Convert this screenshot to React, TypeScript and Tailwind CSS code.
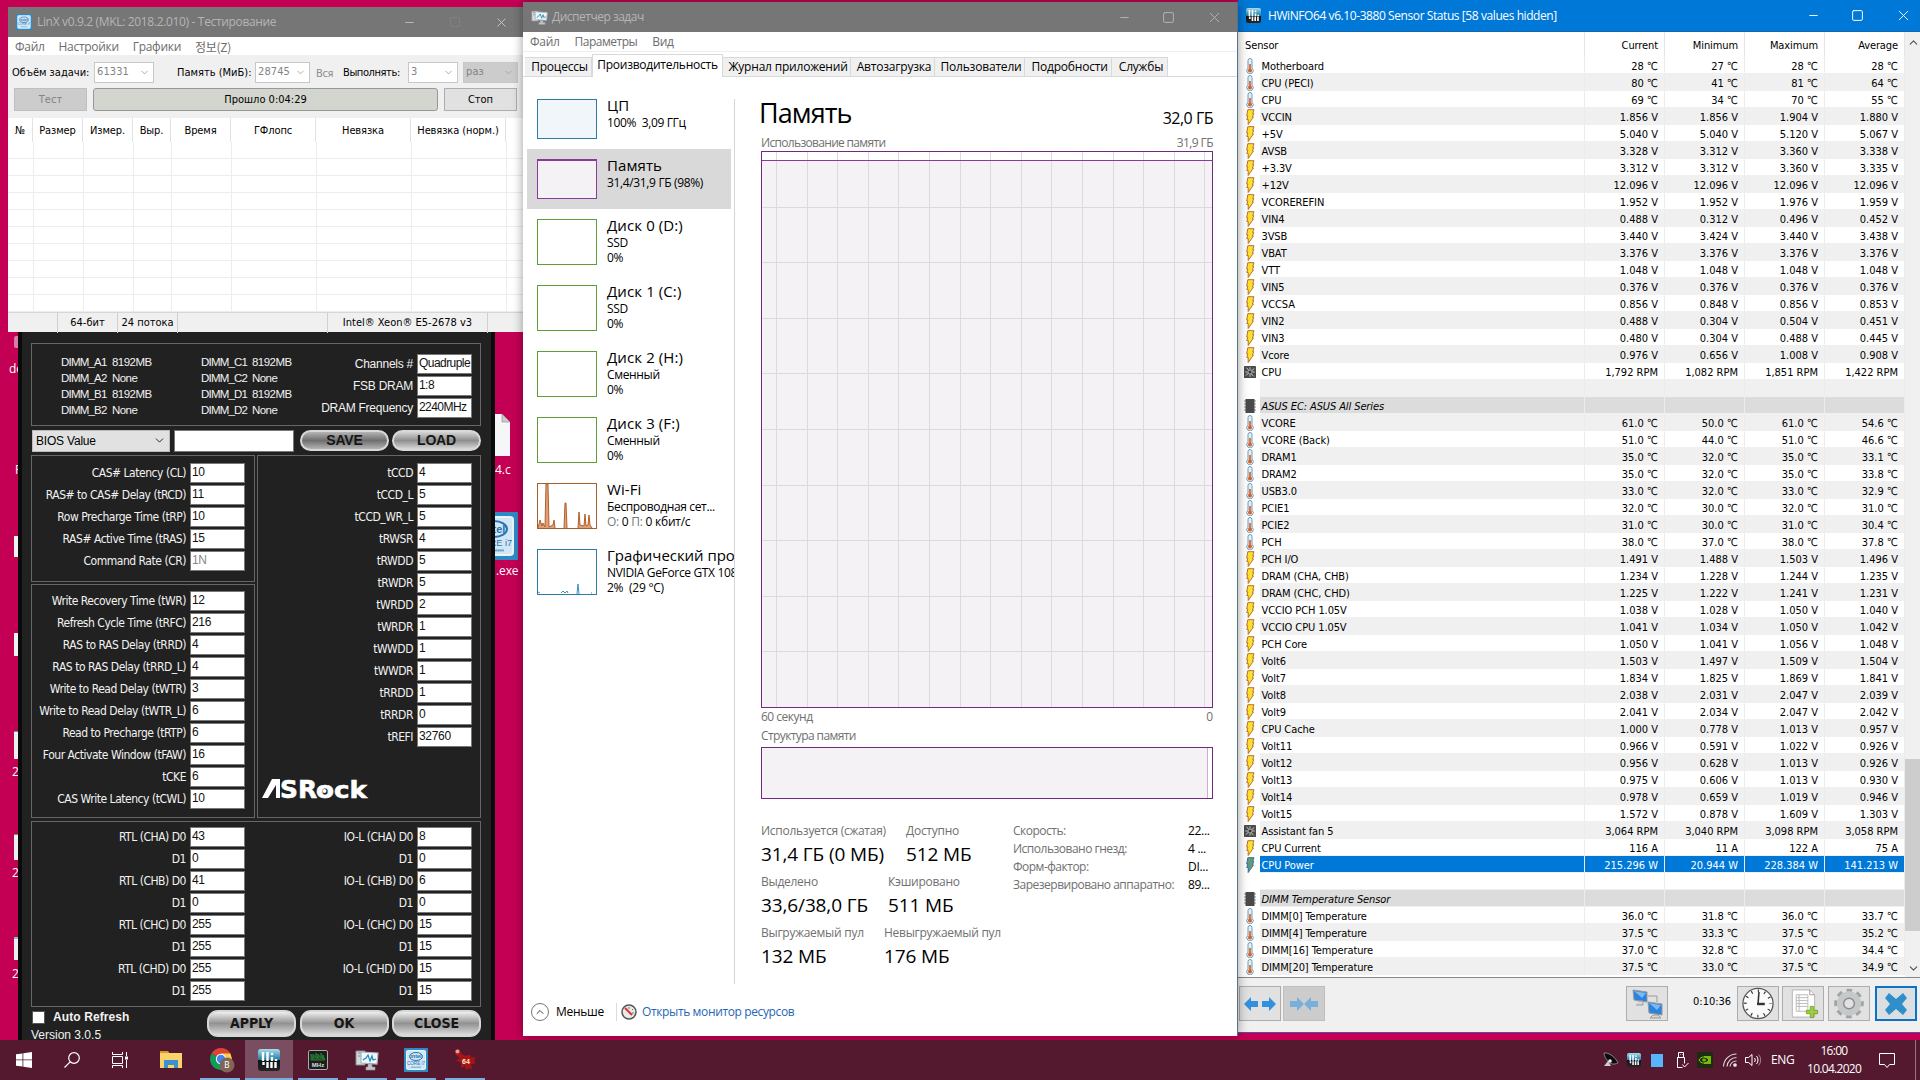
import type { ReactNode } from 'react'
import { ChevronDown, ChevronUp, Minus, Square, X } from 'lucide-react'

const tahoma = "font-['DejaVu_Sans_Condensed','DejaVu_Sans',sans-serif] text-[11px]"
const segoe = "font-['Open_Sans','Noto_Sans',sans-serif] text-[12px]"

type Sensor = [kind: string, name: string, ...values: string[]]

const sensors: Sensor[] = [
  ['t', 'Motherboard', '28 °C', '27 °C', '28 °C', '28 °C'],
  ['t', 'CPU (PECI)', '80 °C', '41 °C', '81 °C', '64 °C'],
  ['t', 'CPU', '69 °C', '34 °C', '70 °C', '55 °C'],
  ['v', 'VCCIN', '1.856 V', '1.856 V', '1.904 V', '1.880 V'],
  ['v', '+5V', '5.040 V', '5.040 V', '5.120 V', '5.067 V'],
  ['v', 'AVSB', '3.328 V', '3.312 V', '3.360 V', '3.338 V'],
  ['v', '+3.3V', '3.312 V', '3.312 V', '3.360 V', '3.335 V'],
  ['v', '+12V', '12.096 V', '12.096 V', '12.096 V', '12.096 V'],
  ['v', 'VCOREREFIN', '1.952 V', '1.952 V', '1.976 V', '1.959 V'],
  ['v', 'VIN4', '0.488 V', '0.312 V', '0.496 V', '0.452 V'],
  ['v', '3VSB', '3.440 V', '3.424 V', '3.440 V', '3.438 V'],
  ['v', 'VBAT', '3.376 V', '3.376 V', '3.376 V', '3.376 V'],
  ['v', 'VTT', '1.048 V', '1.048 V', '1.048 V', '1.048 V'],
  ['v', 'VIN5', '0.376 V', '0.376 V', '0.376 V', '0.376 V'],
  ['v', 'VCCSA', '0.856 V', '0.848 V', '0.856 V', '0.853 V'],
  ['v', 'VIN2', '0.488 V', '0.304 V', '0.504 V', '0.451 V'],
  ['v', 'VIN3', '0.480 V', '0.304 V', '0.488 V', '0.445 V'],
  ['v', 'Vcore', '0.976 V', '0.656 V', '1.008 V', '0.908 V'],
  ['f', 'CPU', '1,792 RPM', '1,082 RPM', '1,851 RPM', '1,422 RPM'],
  ['', '', '', '', '', ''],
  ['h', 'ASUS EC: ASUS All Series', '', '', '', ''],
  ['t', 'VCORE', '61.0 °C', '50.0 °C', '61.0 °C', '54.6 °C'],
  ['t', 'VCORE (Back)', '51.0 °C', '44.0 °C', '51.0 °C', '46.6 °C'],
  ['t', 'DRAM1', '35.0 °C', '32.0 °C', '35.0 °C', '33.1 °C'],
  ['t', 'DRAM2', '35.0 °C', '32.0 °C', '35.0 °C', '33.8 °C'],
  ['t', 'USB3.0', '33.0 °C', '32.0 °C', '33.0 °C', '32.9 °C'],
  ['t', 'PCIE1', '32.0 °C', '30.0 °C', '32.0 °C', '31.0 °C'],
  ['t', 'PCIE2', '31.0 °C', '30.0 °C', '31.0 °C', '30.4 °C'],
  ['t', 'PCH', '38.0 °C', '37.0 °C', '38.0 °C', '37.8 °C'],
  ['v', 'PCH I/O', '1.491 V', '1.488 V', '1.503 V', '1.496 V'],
  ['v', 'DRAM (CHA, CHB)', '1.234 V', '1.228 V', '1.244 V', '1.235 V'],
  ['v', 'DRAM (CHC, CHD)', '1.225 V', '1.222 V', '1.241 V', '1.231 V'],
  ['v', 'VCCIO PCH 1.05V', '1.038 V', '1.028 V', '1.050 V', '1.040 V'],
  ['v', 'VCCIO CPU 1.05V', '1.041 V', '1.034 V', '1.050 V', '1.042 V'],
  ['v', 'PCH Core', '1.050 V', '1.041 V', '1.056 V', '1.048 V'],
  ['v', 'Volt6', '1.503 V', '1.497 V', '1.509 V', '1.504 V'],
  ['v', 'Volt7', '1.834 V', '1.825 V', '1.869 V', '1.841 V'],
  ['v', 'Volt8', '2.038 V', '2.031 V', '2.047 V', '2.039 V'],
  ['v', 'Volt9', '2.041 V', '2.034 V', '2.047 V', '2.042 V'],
  ['v', 'CPU Cache', '1.000 V', '0.778 V', '1.013 V', '0.957 V'],
  ['v', 'Volt11', '0.966 V', '0.591 V', '1.022 V', '0.926 V'],
  ['v', 'Volt12', '0.956 V', '0.628 V', '1.013 V', '0.926 V'],
  ['v', 'Volt13', '0.975 V', '0.606 V', '1.013 V', '0.930 V'],
  ['v', 'Volt14', '0.978 V', '0.659 V', '1.019 V', '0.946 V'],
  ['v', 'Volt15', '1.572 V', '0.878 V', '1.609 V', '1.303 V'],
  ['f', 'Assistant fan 5', '3,064 RPM', '3,040 RPM', '3,098 RPM', '3,058 RPM'],
  ['v', 'CPU Current', '116 A', '11 A', '122 A', '75 A'],
  ['s', 'CPU Power', '215.296 W', '20.944 W', '228.384 W', '141.213 W'],
  ['', '', '', '', '', ''],
  ['h', 'DIMM Temperature Sensor', '', '', '', ''],
  ['t', 'DIMM[0] Temperature', '36.0 °C', '31.8 °C', '36.0 °C', '33.7 °C'],
  ['t', 'DIMM[4] Temperature', '37.5 °C', '33.3 °C', '37.5 °C', '35.2 °C'],
  ['t', 'DIMM[16] Temperature', '37.0 °C', '32.8 °C', '37.0 °C', '34.4 °C'],
  ['t', 'DIMM[20] Temperature', '37.5 °C', '33.0 °C', '37.5 °C', '34.9 °C'],
]

const timings = [
  ['CAS# Latency (CL)', '10'],
  ['RAS# to CAS# Delay (tRCD)', '11'],
  ['Row Precharge Time (tRP)', '10'],
  ['RAS# Active Time (tRAS)', '15'],
  ['Command Rate (CR)', '1N'],
]

const secondary = [
  ['Write Recovery Time (tWR)', '12'],
  ['Refresh Cycle Time (tRFC)', '216'],
  ['RAS to RAS Delay (tRRD)', '4'],
  ['RAS to RAS Delay (tRRD_L)', '4'],
  ['Write to Read Delay (tWTR)', '3'],
  ['Write to Read Delay (tWTR_L)', '6'],
  ['Read to Precharge (tRTP)', '6'],
  ['Four Activate Window (tFAW)', '16'],
  ['tCKE', '6'],
  ['CAS Write Latency (tCWL)', '10'],
]

const turnaround = [
  ['tCCD', '4'], ['tCCD_L', '5'], ['tCCD_WR_L', '5'], ['tRWSR', '4'], ['tRWDD', '5'], ['tRWDR', '5'], ['tWRDD', '2'],
  ['tWRDR', '1'], ['tWWDD', '1'], ['tWWDR', '1'], ['tRRDD', '1'], ['tRRDR', '0'], ['tREFI', '32760'],
]

const rtl = [
  ['RTL (CHA) D0', '43'], ['D1', '0'], ['RTL (CHB) D0', '41'], ['D1', '0'],
  ['RTL (CHC) D0', '255'], ['D1', '255'], ['RTL (CHD) D0', '255'], ['D1', '255'],
]

const iol = [
  ['IO-L (CHA) D0', '8'], ['D1', '0'], ['IO-L (CHB) D0', '6'], ['D1', '0'],
  ['IO-L (CHC) D0', '15'], ['D1', '15'], ['IO-L (CHD) D0', '15'], ['D1', '15'],
]

const IntelIcon = ({ className }: { className: string }) => (
  <svg viewBox="0 0 24 24" className={className}>
    <rect width="24" height="24" fill="#2f8ac4" />
    <rect x="2" y="2" width="20" height="20" rx="2" fill="#e9f3fa" />
    <rect x="3" y="3" width="18" height="18" rx="1" fill="#d3e6f3" />
    <ellipse cx="12" cy="8.5" rx="6.5" ry="4" fill="none" stroke="#2474b5" strokeWidth="1" />
    <text x="12" y="10.4" textAnchor="middle" fontSize="5.5" fontFamily="Liberation Sans" fontWeight="bold" fill="#2474b5">intel</text>
    <text x="12" y="17" textAnchor="middle" fontSize="4.6" fontFamily="Liberation Sans" fill="#2474b5">CORE i7</text>
    <path d="M7 19.2h10" stroke="#6aa9d4" />
  </svg>
)

const HwIcon = ({ className }: { className: string }) => (
  <svg viewBox="0 0 22 22" className={className}>
    <defs>
      <linearGradient id="hw" x1="0" y1="0" x2="0" y2="1">
        <stop offset="0" stopColor="#a9dcec" />
        <stop offset=".5" stopColor="#1f7ba3" />
        <stop offset=".52" stopColor="#0c1318" />
        <stop offset="1" stopColor="#262626" />
      </linearGradient>
    </defs>
    <rect width="22" height="22" rx="3" fill="url(#hw)" />
    <path d="M5 3v9M9.500 3v9M14 8v4M18 10v2M5.500 13v3M9.500 13v6M13.500 13v6M17.500 13v6" stroke="#fff" strokeWidth="2.400" />
    <circle cx="14" cy="5" r="1.300" fill="#fff" />
  </svg>
)

const MonitorIcon = ({ className }: { className: string }) => (
  <svg viewBox="0 0 24 24" className={className}>
    <path d="M1 3h9v14H1z" fill="#d5d9db" stroke="#858b8f" />
    <path d="M3 5h5M3 8h5" stroke="#7d8b91" />
    <path d="M6 4l17 1-1 11-16-1z" fill="#eef7fc" stroke="#b0b5b8" strokeWidth="1.200" />
    <path d="M8 12l3-2 2-3 2 6 2-5 1 4 3-1" fill="none" stroke="#2187b8" strokeWidth="1.200" />
    <path d="M13 16h4v3h3v3h-9v-3h2z" fill="#c1c4c6" stroke="#8f9496" strokeWidth=".6" />
  </svg>
)

const SensorIcon = ({ kind }: { kind: string }) => {
  if (kind === 't')
    return (
      <svg viewBox="0 0 14 16" className="h-4 w-3.5">
        <path d="M5 2.500a2 2 0 0 1 4 0v7.700a3.200 3.200 0 1 1-4 0z" fill="#e4f1f8" stroke="#6f9ab5" />
        <path d="M7 6v6" stroke="#d85a1e" strokeWidth="1.600" />
        <circle cx="7" cy="12.500" r="2" fill="#d4622b" />
      </svg>
    )
  if (kind === 'v' || kind === 's')
    return (
      <svg viewBox="0 0 14 16" className="h-4 w-3.5">
        <path
          d="M4.800.7H11L9.700 4.500h1L9.500 8h.9l-5.200 7.500V10.500H3.800L4.800 7H3.700z"
          fill={kind === 's' ? '#5f9a83' : '#ffe02e'}
          stroke={kind === 's' ? '#3f6f8c' : '#b9702f'}
        />
      </svg>
    )
  if (kind === 'f')
    return (
      <svg viewBox="0 0 14 14" className="h-3 w-3">
        <rect width="14" height="14" rx="1" fill="#4b4b4b" />
        <path d="M7 7L3 2M7 7l5-4M7 7l4 5M7 7l-5 4M7 7V1.500M7 7h5.500M7 7v5.500M7 7H1.500" stroke="#cfcfcf" strokeWidth="1.100" />
        <circle cx="7" cy="7" r="1.600" fill="#333" />
      </svg>
    )
  if (kind === 'h')
    return (
      <svg viewBox="0 0 14 14" className="h-3.5 w-3.5">
        <path d="M1 2h12M1 5h12M1 8h12M1 11h12" stroke="#8a8a8a" />
        <rect x="2.500" y="0" width="9" height="14" fill="#4a4a4a" />
      </svg>
    )
  return null
}

const WindowButtons = ({ className }: { className: string }) => (
  <div className={`flex items-center ${className}`}>
    <Minus size={13} strokeWidth={1.8} />
    <Square size={13} strokeWidth={1.8} />
    <X size={17} strokeWidth={1.3} />
  </div>
)

const Combo = ({ value, className }: { value: string; className: string }) => (
  <div className={`flex h-[21px] shrink-0 items-center justify-between border border-[#c8c8c8] pl-0.5 pr-[3px] text-[#838383] ${className}`}>
    <span className="tracking-[0.1px]">{value}</span>
    <ChevronDown size={11} className="text-[#a5a5a5]" />
  </div>
)

const LinX = () => {
  const columns = [
    ['№', 'w-[25px]'], ['Размер', 'w-[50px]'], ['Измер.', 'w-[50px]'], ['Выр.', 'w-[38px]'],
    ['Время', 'w-[60px]'], ['ГФлопс', 'w-[85px]'], ['Невязка', 'w-[95px]'], ['Невязка (норм.)', 'w-[95px]'],
  ]

  return (
    <div className={`absolute left-2 top-[7px] flex h-[325px] w-[515px] flex-col bg-white text-black ${tahoma}`}>
      <div className={`flex h-[30px] shrink-0 items-center bg-[#767676] pl-2 pr-[14px] text-[#b5b5b5] ${segoe}`}>
        <IntelIcon className="mr-[5px] h-4 w-4" />
        <span className="flex-1 tracking-[-0.34px]">LinX v0.9.2 (MKL: 2018.2.010) - Тестирование</span>
        <div className="flex items-center gap-[33px] text-[#c8c8c8]">
          <Minus size={13} strokeWidth={1.5} />
          <Square size={12} strokeWidth={1.5} className="text-[#858585]" />
          <X size={15} strokeWidth={1.5} />
        </div>
      </div>

      <div className={`flex h-[18px] shrink-0 items-center gap-[14px] pl-[7px] pt-0.5 tracking-[-0.3px] text-[#6d6d6d] ${segoe}`}>
        <span>Файл</span>
        <span>Настройки</span>
        <span>Графики</span>
        <span className="font-['Noto_Sans_CJK_KR',sans-serif]">정보(Z)</span>
      </div>

      <div className="h-[63px] shrink-0 bg-[#f0f0f0] pt-[7px]">
        <div className="flex h-[21px] items-center whitespace-nowrap">
          <span className="w-[82px] pl-1 pt-px">Объём задачи:</span>
          <Combo value="61331" className="ml-1 w-[60px] bg-white" />
          <span className="w-[97px] pl-[23px] pt-px">Память (МиБ):</span>
          <Combo value="28745" className="ml-1 w-[55px] bg-white" />
          <span className="w-[25px] pl-1.5 pt-1 tracking-[-0.4px] text-[#8d8d8d]">Вся</span>
          <span className="w-[68px] pl-2 pt-px tracking-[-0.4px]">Выполнять:</span>
          <Combo value="3" className="ml-[5px] w-[50px] bg-white" />
          <Combo value="раз" className="ml-[5px] w-[55px] bg-[#ccc]" />
        </div>
        <div className="mt-[5px] flex h-[23px] gap-1.5 pl-1.5 text-center leading-[22px]">
          <div className="w-[73px] border border-[#bfbfbf] bg-[#ccc] text-[#838383]">Тест</div>
          <div className="w-[345px] rounded-[3px] border border-[#989898] bg-[#d3d6ce]">Прошло 0:04:29</div>
          <div className="w-[73px] border border-[#adadad] bg-[#e1e1e1]">Стоп</div>
        </div>
      </div>

      <div className="flex h-6 shrink-0 text-center leading-[26px]">
        {columns.map(([title, width]) => (
          <span key={title} className={`shrink-0 whitespace-nowrap border-r border-[#e2e2e2] tracking-[-0.1px] ${width}`}>{title}</span>
        ))}
      </div>
      <div className="flex-1">
        {Array.from({ length: 10 }, (_, row) => (
          <div key={row} className="flex h-[17px] border-b border-[#ededed]">
            {columns.map(([title, width], i) => (
              <span key={title} className={`shrink-0 border-r border-[#ededed] ${width} ${i === 0 ? 'box-content' : ''}`} />
            ))}
          </div>
        ))}
      </div>

      <div className="flex h-5 shrink-0 items-center border-t border-[#d7d7d7] bg-[#f0f0f0] text-center leading-5">
        <span className="w-[50px] border-r border-[#d0d0d0]">&nbsp;</span>
        <span className="w-[60px] border-r border-[#d0d0d0]">64-бит</span>
        <span className="w-[60px] border-r border-[#d0d0d0]">24 потока</span>
        <span className="w-[150px] border-r border-[#d0d0d0]">&nbsp;</span>
        <span className="w-[160px] border-r border-[#d0d0d0]">Intel® Xeon® E5-2678 v3</span>
      </div>
    </div>
  )
}

const Fields = ({ rows, arial }: { rows: string[][]; arial?: boolean }) => (
  <div className="flex flex-col gap-0.5">
    {rows.map(([label, value], i) => (
      <div key={i} className="flex items-center justify-end gap-1">
        <span className={arial ? "font-['Liberation_Sans',sans-serif] text-[12px] tracking-[-0.25px]" : 'text-[12px] tracking-[-0.47px]'}>{label}</span>
        <span className={`h-5 w-[55px] border border-[#777] bg-white pl-px font-['Liberation_Sans',sans-serif] text-[12px] leading-[17px] ${arial ? 'tracking-[-0.55px]' : 'tracking-[-0.3px]'} ${value === '1N' ? 'text-[#888]' : 'text-[#111]'}`}>
          {value}
        </span>
      </div>
    ))}
  </div>
)

const Pill = ({ children, className }: { children: ReactNode; className: string }) => (
  <div className={`flex items-center justify-center border-2 border-[#d8d8d8] font-bold text-[#161616] ${className}`}>{children}</div>
)

const AsRock = () => (
  <div className={`absolute left-[18px] top-[325px] h-[715px] w-[477px] border-x-4 border-[#0a0a0a] bg-[#212121] pl-[9px] pt-[18px] text-[#f2f2f2] ${tahoma}`}>
    <div className="flex h-[83px] w-[450px] border border-[#666] font-['Liberation_Sans',sans-serif] text-[12px]">
      {['AB', 'CD'].map((pair) => (
        <div key={pair} className="w-[140px] pl-[29px] pt-2.5 text-[11.5px] leading-4">
          {[0, 1].map((n) => (
            <div key={n}>
              <div className="flex"><span className="w-[51px] tracking-[-0.8px]">DIMM_{pair[n]}1</span><span className="tracking-[-0.55px]">8192MB</span></div>
              <div className="flex"><span className="w-[51px] tracking-[-0.8px]">DIMM_{pair[n]}2</span><span className="tracking-[-0.55px]">None</span></div>
            </div>
          ))}
        </div>
      ))}
      <div className="flex-1 whitespace-nowrap pr-2 pt-2.5">
        <Fields arial rows={[['Channels #', 'Quadruple'], ['FSB DRAM', '1:8'], ['DRAM Frequency', '2240MHz']]} />
      </div>
    </div>

    <div className="mt-[3px] flex h-[23px] w-[450px] items-center font-['Liberation_Sans',sans-serif] text-[12px] tracking-[-0.2px]">
      <div className="ml-px flex h-[22px] w-[138px] items-center justify-between border border-[#bbb] bg-[#e1e1e1] px-[3px] text-black">
        BIOS Value <ChevronDown size={13} strokeWidth={1.5} />
      </div>
      <div className="ml-1 h-[22px] w-[120px] border border-[#777] bg-white" />
      <Pill className="ml-1.5 h-[21px] w-[89px] rounded-full bg-linear-to-b from-[#b5b5b5] via-[#6f6f6f] to-[#b5b5b5] text-[14px]">SAVE</Pill>
      <Pill className="ml-[3px] h-[21px] w-[89px] rounded-full bg-linear-to-b from-[#d5d5d5] via-[#8f8f8f] to-[#d9d9d9] text-[14px]">LOAD</Pill>
    </div>

    <div className="mt-[3px] flex w-[450px] gap-0.5">
      <div className="flex w-[224px] flex-col gap-0.5">
        <div className="h-[127px] border border-[#666] pr-[9px] pt-[7px]"><Fields rows={timings} /></div>
        <div className="h-[234px] border border-[#666] pr-[9px] pt-1.5"><Fields rows={secondary} /></div>
      </div>
      <div className="h-[363px] w-[224px] border border-[#666] pr-2 pt-[7px]">
        <Fields rows={turnaround} />
        <svg viewBox="0 0 106 22" className="ml-1 mt-[31px] h-[22px] w-[106px] overflow-visible">
          <path d="M0 20L10 1h8v19h-4V7L6 20z" fill="#fff" />
          <text x="18" y="19.500" textLength="37" lengthAdjust="spacingAndGlyphs" fontFamily="DejaVu Sans" fontWeight="bold" fontSize="25" fill="#fff" stroke="#fff" strokeWidth=".6">SR</text>
          <text x="54" y="19.500" textLength="51" lengthAdjust="spacingAndGlyphs" fontFamily="DejaVu Sans" fontWeight="bold" fontSize="23" fill="#fff" stroke="#fff" strokeWidth=".6">ock</text>
          <circle cx="62.500" cy="13" r="2" fill="#fff" />
        </svg>
      </div>
    </div>

    <div className="mt-[3px] flex h-[186px] w-[450px] border border-[#666] pt-[5px]">
      <div className="w-[213px]"><Fields rows={rtl} /></div>
      <div className="w-[227px]"><Fields rows={iol} /></div>
    </div>

    <div className="flex w-[460px] items-start">
      <div className="w-44 shrink-0 pt-[3px] font-['Liberation_Sans',sans-serif] text-[12px]">
        <div className="flex items-center gap-2 font-bold leading-[15px] tracking-[0.1px]">
          <span className="ml-px h-[13px] w-[13px] border border-[#555] bg-white" />
          Auto Refresh
        </div>
        <div className="mt-0.5 leading-4">Version 3.0.5</div>
      </div>
      {['APPLY', 'OK', 'CLOSE'].map((label) => (
        <Pill key={label} className="mr-[3.5px] mt-[3px] h-[27px] w-[89px] shrink-0 rounded-[11px] bg-linear-to-b from-[#f0f0f0] via-[#929292] to-[#dcdcdc] text-[14px]">{label}</Pill>
      ))}
    </div>
  </div>
)

const monitors = [
  { name: 'ЦП', lines: ['100%  3,09 ГГц'], box: 'h-10 border-[#2f7ba8] bg-[#f1f6fa]' },
  { name: 'Память', lines: ['31,4/31,9 ГБ (98%)'], box: 'h-10 border-[#8b3a9c] border-t-2 bg-[#f4f2f5]' },
  { name: 'Диск 0 (D:)', lines: ['SSD', '0%'], box: 'h-[46px] border-[#5f9e35]' },
  { name: 'Диск 1 (C:)', lines: ['SSD', '0%'], box: 'h-[46px] border-[#5f9e35]' },
  { name: 'Диск 2 (H:)', lines: ['Сменный', '0%'], box: 'h-[46px] border-[#5f9e35]' },
  { name: 'Диск 3 (F:)', lines: ['Сменный', '0%'], box: 'h-[46px] border-[#5f9e35]' },
  { name: 'Wi-Fi', lines: ['Беспроводная сет...', ''], box: 'h-[46px] border-[#a3602b]' },
  { name: 'Графический про', lines: ['NVIDIA GeForce GTX 108', '2%  (29 °C)'], box: 'h-[46px] border-[#2f7ba8]' },
]

const Stat = ({ label, value, className }: { label: string; value: string; className?: string }) => (
  <div className={`whitespace-nowrap ${className ?? ''}`}>
    <div className="h-4 leading-4 tracking-[-0.27px] text-[#707070]">{label}</div>
    <div className="h-[35px] text-[19px] leading-[30px] tracking-[-0.12px]">{value}</div>
  </div>
)

const TaskManager = () => {
  const tabs = [
    ['Процессы', 'w-[67px]'], ['Производительность', 'w-[131px]'], ['Журнал приложений', 'w-[128px]'], ['Автозагрузка', 'w-[84px]'],
    ['Пользователи', 'w-[90px]'], ['Подробности', 'w-[87px]'], ['Службы', 'w-[56px]'],
  ]

  return (
    <div className={`absolute left-[523px] top-0.5 flex h-[1034px] w-[715px] flex-col border-r border-[#5a7085] bg-white text-black shadow-[0_0_10px_#0006] ${segoe}`}>
      <div className="flex h-[30px] shrink-0 items-center bg-[#767676] pl-2 pr-3.5 text-[#b5b5b5]">
        <MonitorIcon className="mr-[4px] h-[17px] w-[17px]" />
        <span className="flex-1 tracking-[-0.5px]">Диспетчер задач</span>
        <WindowButtons className="gap-[31px]" />
      </div>
      <div className="flex h-5 shrink-0 items-center gap-[15px] border-b border-[#eee] pl-[7px] text-[#6d6d6d]">
        <span className="tracking-[-0.3px]">Файл</span>
        <span className="tracking-[-0.5px]">Параметры</span>
        <span className="tracking-[-0.3px]">Вид</span>
      </div>

      <div className="flex h-[25px] shrink-0 items-end border-b border-[#d9d9d9] pl-0.5 text-center">
        {tabs.map(([title, width], i) => (
          <span
            key={title}
            className={`shrink-0 whitespace-nowrap border-[#d9d9d9] ${width} ${i === 1 ? '-mb-px h-[23px] border border-b-0 bg-white leading-[19px] tracking-[-0.25px]' : 'h-[19px] border-r border-t bg-[#f0f0f0] pl-[3px] leading-[18px] tracking-[-0.2px]'}`}
          >
            {title}
          </span>
        ))}
      </div>

      <div className="flex min-h-0 flex-1">
        <div className="mt-[22px] h-[885px] w-[212px] shrink-0 overflow-x-clip border-r border-[#d5d5d5] pl-1">
          {monitors.map(({ name, lines, box }, i) => (
            <div
              key={name}
              className={`flex pl-2.5 ${i < 2 ? 'h-[60px]' : 'h-[66px]'} ${i === 0 ? '-mt-2.5 mb-0 pt-2.5' : 'pt-2.5'} ${i === 1 ? 'w-[204px] bg-[#d9d9d9]' : ''}`}
            >
              <div className={`w-[60px] shrink-0 overflow-hidden border ${box}`}>
                {name === 'Wi-Fi' && (
                  <svg viewBox="0 0 58 44" className="h-11 w-[58px]" fill="#dda07a" stroke="#b4602a">
                    <path d="M0 44l2-8 2 6 1-3 2 4L8 0h2l1 43 4-2 1-5 1 8M26 44l1-25h1l1 25M40 44l1-16 1 13 4 1 1-12 1 12 2-1 1-10 1 10 2 3" strokeWidth="1" />
                  </svg>
                )}
                {i === 7 && (
                  <svg viewBox="0 0 58 44" className="h-11 w-[58px]" fill="none" stroke="#3b8fbd">
                    <path d="M0 42l2 1M23 43l2-2 2 2 2-2 1 2M39 44l1-10 1 10M53 43h1" />
                  </svg>
                )}
              </div>
              <div className="-mt-px ml-2.5 whitespace-pre leading-[15px]">
                <div className={`h-[17px] text-[15px] leading-[14px] ${i === 7 ? '-tracking-[0.05px]' : 'tracking-[0.1px]'}`}>{name}</div>
                <div className="tracking-[-0.35px]">{lines[0]}</div>
                <div className="tracking-[-0.25px]">
                  {name === 'Wi-Fi' ? (
                    <><span className="text-[#777]">О:</span> 0 <span className="text-[#777]">П:</span> 0 кбит/с</>
                  ) : lines[1]}
                </div>
              </div>
            </div>
          ))}
        </div>

        <div className="ml-[26px] w-[452px]">
          <div className="flex h-[57px] items-end justify-between pb-[5px]">
            <span className="-ml-0.5 text-[27px] leading-[32px] tracking-[-0.9px]">Память</span>
            <span className="pb-px text-[16px] leading-5 tracking-[-0.5px]">32,0 ГБ</span>
          </div>
          <div className="flex h-[17px] items-center justify-between text-[#707070]">
            <span className="tracking-[-0.68px]">Использование памяти</span>
            <span className="tracking-[-0.6px]">31,9 ГБ</span>
          </div>
          <svg viewBox="0 0 452 557" className="h-[557px] w-[452px]" fill="none">
            <rect x="0" y="9" width="452" height="548" fill="#f4f2f5" />
            {Array.from({ length: 15 }, (_, i) => <path key={i} d={`M${Math.round(15 + i * 30.6) + 0.5} 0V557`} stroke="#e0d7e3" />)}
            {Array.from({ length: 9 }, (_, i) => <path key={i} d={`M0 ${Math.round((i + 1) * 55.6) + 0.5}H452`} stroke="#e0d7e3" />)}
            <path d="M0 9.500h452" stroke="#8b3a9c" />
            <rect x=".5" y=".5" width="451" height="556" stroke="#702a80" />
          </svg>
          <div className="flex h-[19px] items-center justify-between pb-0.5 text-[#707070]">
            <span className="tracking-[-0.5px]">60 секунд</span>
            <span>0</span>
          </div>
          <div className="h-5 leading-[18px] tracking-[-0.6px] text-[#707070]">Структура памяти</div>
          <div className="h-[52px] border border-[#702a80] bg-white pr-1">
            <div className="h-full border-r border-[#c9b0d0] bg-[#f4f2f5]" />
          </div>

          <div className="mt-6 flex">
            <div className="w-[252px]">
              <div className="flex">
                <Stat className="w-[145px]" label="Используется (сжатая)" value="31,4 ГБ (0 МБ)" />
                <Stat label="Доступно" value="512 МБ" />
              </div>
              <div className="flex">
                <Stat className="w-[127px]" label="Выделено" value="33,6/38,0 ГБ" />
                <Stat label="Кэшировано" value="511 МБ" />
              </div>
              <div className="flex">
                <Stat className="w-[123px]" label="Выгружаемый пул" value="132 МБ" />
                <Stat label="Невыгружаемый пул" value="176 МБ" />
              </div>
            </div>
            <div className="flex-1 whitespace-nowrap leading-4">
              {[['Скорость:', '22...'], ['Использовано гнезд:', '4 ...'], ['Форм-фактор:', 'DI...'], ['Зарезервировано аппаратно:', '89...']].map(([label, value]) => (
                <div key={label} className="flex h-[18px]">
                  <span className="w-[175px] tracking-[-0.5px] text-[#707070]">{label}</span>
                  <span className="tracking-[-0.3px]">{value}</span>
                </div>
              ))}
            </div>
          </div>
        </div>
      </div>

      <div className="mb-[13px] flex h-[22px] shrink-0 items-center pl-2">
        <span className="flex h-[18px] w-[18px] items-center justify-center rounded-full border border-[#777]">
          <ChevronUp size={12} strokeWidth={1.5} />
        </span>
        <span className="ml-[7px] w-[60px] tracking-[-0.3px]">Меньше</span>
        <span className="h-[18px] border-l border-[#ddd]" />
        <svg viewBox="0 0 16 16" className="ml-1 h-4 w-4" fill="none">
          <circle cx="8" cy="8" r="7" fill="#e7e9ea" stroke="#555" strokeWidth="1.500" />
          <path d="M4 4l7 7" stroke="#d33" strokeWidth="2" />
          <path d="M8 3v2M12 5l-1 1M13 9h-2" stroke="#3a8b49" />
        </svg>
        <span className="ml-[5px] tracking-[-0.37px] text-[#1f66b5]">Открыть монитор ресурсов</span>
      </div>
    </div>
  )
}

const ToolButton = ({ children, className }: { children: ReactNode; className?: string }) => (
  <div className={`flex h-[35px] w-[42px] shrink-0 items-center justify-center ${className ?? 'border border-[#adadad] bg-[#e1e1e1]'}`}>{children}</div>
)

const HwInfo = () => (
  <div className={`absolute left-[1238px] top-0 flex h-[1033px] w-[682px] flex-col border-b border-[#5450a0] bg-white text-black ${tahoma}`}>
    <div className={`flex h-8 shrink-0 items-center border-b border-[#1367ad] bg-[#0078d7] pl-2 pr-2 text-white ${segoe}`}>
      <HwIcon className="mr-[7px] h-[15px] w-[15px]" />
      <span className="flex-1 tracking-[-0.42px]">HWiNFO64 v6.10-3880 Sensor Status [58 values hidden]</span>
      <WindowButtons className="gap-[31px]" />
    </div>

    <div className="flex h-[946px] shrink-0 overflow-hidden border-b border-[#828790] pl-0.5">
      <div className="w-[669px]">
        <div className="flex h-[25px] leading-[28px]">
          <span className="w-[345px] border-r border-[#e5e5e5] pl-[5px] tracking-[-0.1px]">Sensor</span>
          {['Current', 'Minimum', 'Maximum', 'Average'].map((title) => (
            <span key={title} className="w-20 border-r border-[#e5e5e5] pr-1.5 text-right tracking-[-0.1px]">{title}</span>
          ))}
        </div>
        {sensors.map(([kind, name, ...values], i) => {
          let tone = i % 2 ? 'bg-[#f0f0f0]' : 'bg-white'
          if (kind === 'h') tone = 'bg-[#dcdcdc]'
          if (kind === 's') tone = 'bg-[#0078d7] text-white'
          return (
            <div key={i} className="flex h-[17px]">
              <span className="flex w-5 items-center justify-center"><SensorIcon kind={kind} /></span>
              <div className={`flex border-b border-[#f0f0f0] leading-[19px] ${tone}`}>
                <span className={`w-[325px] border-r border-[#ececec] pl-[1.5px] ${kind === 'h' ? 'italic tracking-[-0.1px]' : 'tracking-[-0.1px]'}`}>{name}</span>
                {values.map((value, n) => (
                  <span key={n} className="w-20 border-r border-[#ececec] pr-1.5 text-right">{value.replace('°C', '℃')}</span>
                ))}
              </div>
            </div>
          )
        })}
      </div>
      <div className="flex flex-1 flex-col bg-[#f0f0f0] text-[#505050]">
        <div className="h-[727px] pt-1"><ChevronUp size={13} className="ml-0.5" /></div>
        <div className="h-[172px] bg-[#cdcdcd]" />
        <div className="pt-[31px]"><ChevronDown size={13} className="ml-0.5" /></div>
      </div>
    </div>

    <div className="flex flex-1 items-start bg-[#f0f0f0] pl-px pt-2">
      <ToolButton>
        <svg viewBox="0 0 34 16" className="h-4 w-[34px]" fill="#3191e0">
          <path d="M1 8l7-7v4h7v6H8v4zM33 8l-7-7v4h-7v6h7v4z" />
        </svg>
      </ToolButton>
      <ToolButton className="ml-0.5 border border-[#bfbfbf] bg-[#ccc]">
        <svg viewBox="0 0 34 16" className="h-4 w-[34px]" fill="#79b0db">
          <path d="M17 8l-7-7v4H3v6h7v4zM17 8l7-7v4h7v6h-7v4z" />
        </svg>
      </ToolButton>
      <ToolButton className="ml-[301px] border border-[#adadad] bg-[#e1e1e1]">
        <svg viewBox="0 0 34 32" className="h-8 w-[34px]" stroke="#999">
          <path d="M18 8h9v6" fill="none" />
          <path d="M3 2l14 2v10L4 12z" fill="#2a83dc" />
          <path d="M8 13h5v4H6" fill="#d7d7d7" />
          <path d="M18 14l14 2v11l-13-2z" fill="#2a83dc" />
          <path d="M23 27h5l3 3H20z" fill="#d7d7d7" />
          <path d="M4 3l12 2-4 5zM19 15l12 2-4 5z" fill="#7cb7ef" stroke="none" />
        </svg>
      </ToolButton>
      <span className="ml-[25px] w-[44px] pt-2">0:10:36</span>
      <ToolButton>
        <svg viewBox="0 0 34 34" className="h-[33px] w-[34px]" fill="none" stroke="#333">
          <circle cx="17" cy="17" r="15.500" fill="#fbfbfb" stroke="#555" strokeWidth="1.300" />
          <circle cx="17" cy="17" r="13" strokeWidth="3" strokeDasharray="1.200 5.607" strokeDashoffset=".6" />
          <path d="M17 18L18 5" strokeWidth="1.600" />
          <path d="M16 17.500h8" strokeWidth="2.500" />
        </svg>
      </ToolButton>
      <ToolButton className="ml-[3px] border border-[#adadad] bg-[#e1e1e1]">
        <svg viewBox="0 0 34 34" className="h-[33px] w-[34px]" fill="none">
          <path d="M6 3h18l5 5v23H6z" fill="#fff" stroke="#b5b5b5" />
          <path d="M24 3v5h5" stroke="#999" />
          <path d="M10 8h12v17H10zM10 11h12M10 14h12M10 17h12M10 20h12M13 8v17" stroke="#bbb" />
          <path d="M20.500 24h4v-4h3.500v4h4v3.500h-4v4h-3.500v-4h-4z" fill="#9dce45" stroke="#77a52c" />
        </svg>
      </ToolButton>
      <ToolButton className="ml-1 border border-[#adadad] bg-[#e1e1e1]">
        <svg viewBox="0 0 34 34" className="h-[33px] w-[34px]" fill="none">
          <circle cx="17" cy="17" r="13" stroke="#a0a3a5" strokeWidth="4.500" strokeDasharray="5.600 4.610" strokeDashoffset="2.800" />
          <circle cx="17" cy="17" r="9" stroke="#c6c9ca" strokeWidth="7" />
          <circle cx="17" cy="17" r="5.500" fill="#e1e1e1" stroke="#8c8c8c" strokeWidth="1.500" />
        </svg>
      </ToolButton>
      <ToolButton className="ml-[5px] border-2 border-[#0e72c4] bg-[#dcdfe1]">
        <svg viewBox="0 0 24 24" className="h-6 w-6">
          <path d="M5 1l7 6 7-6 4 5-5 6 5 6-4 5-7-6-7 6-4-5 5-6-5-6z" fill="#2f8fcb" />
        </svg>
      </ToolButton>
    </div>
  </div>
)

const tasks = [
  {
    icon: (
      <svg viewBox="0 0 22 20" className="h-5 w-[22px]">
        <path d="M0 1h8l2 3H0z" fill="#d99a2b" />
        <path d="M0 3h22v15H0z" fill="#fbd36c" />
        <path d="M4 18v-8h14v8h-4v-3H8v3z" fill="#3a91cf" />
      </svg>
    ),
  },
  {
    open: true,
    icon: (
      <svg viewBox="0 0 26 26" className="ml-1 h-[26px] w-[26px]">
        <path d="M12 12L2.500 6.500A11 11 0 0 1 21.500 6.500z" fill="#db4437" />
        <path d="M12 12h10.500A11 11 0 0 1 12 23z" fill="#ffcd40" />
        <path d="M21.500 6.500H12v5.500h11z" fill="#ffcd40" />
        <path d="M12 12v11A11 11 0 0 1 2.500 6.500z" fill="#0f9d58" />
        <circle cx="12" cy="12" r="5.200" fill="#fff" />
        <circle cx="12" cy="12" r="4.200" fill="#4285f4" />
        <circle cx="18" cy="18" r="7.500" fill="#806558" />
        <text x="18" y="21" textAnchor="middle" fontSize="8.500" fontFamily="Roboto" fill="#fff">B</text>
      </svg>
    ),
  },
  { open: true, active: true, icon: <HwIcon className="h-[22px] w-[22px]" /> },
  {
    open: true,
    icon: (
      <svg viewBox="0 0 20 20" className="h-5 w-5">
        <rect x=".5" y=".5" width="19" height="19" rx="1.500" fill="#1b1f1c" stroke="#aaa" />
        <path d="M3 10V4l2 5V4l3 4V3l2 6V4l3 4V3l2 6V5l2 5z" stroke="#2b7a39" fill="#1d4d27" />
        <text x="10" y="16.500" textAnchor="middle" fontSize="6" fontFamily="Liberation Sans" fontWeight="bold" fill="#ddd">MHz</text>
      </svg>
    ),
  },
  { open: true, icon: <MonitorIcon className="h-6 w-6" /> },
  { open: true, icon: <IntelIcon className="h-6 w-6" /> },
  {
    open: true,
    icon: (
      <svg viewBox="0 0 24 24" className="h-6 w-6">
        <path d="M2 1.500L6 1l2 4 4 3 5-1.500 1 3L23 9l-2 3.500 1.500 3L18 16l1 5-3-1-3 2-1-4-4 2 .500-5L3 12.500l4-2L2 6z" fill="#a71414" />
        <circle cx="4.500" cy="3.500" r="2" fill="#d9a0a0" />
        <text x="13" y="15.500" textAnchor="middle" fontSize="7" fontFamily="Liberation Sans" fontWeight="bold" fill="#ffe9d0">64</text>
      </svg>
    ),
  },
]

const Taskbar = () => (
  <div className={`absolute bottom-0 left-0 flex h-10 w-full bg-[#54192f] text-white ${segoe}`}>
    <div className="flex w-[147px] items-center">
      <div className="flex w-12 justify-center">
        <svg viewBox="0 0 16 16" className="h-4 w-4" fill="#fff"><path d="M0 2.300L6.500 1.400v6H0zM7.300 1.300L16 0v7.400H7.300zM0 8.300h6.500v6.300L0 13.700zM7.300 8.300H16V16l-8.700-1.300z" /></svg>
      </div>
      <div className="flex w-12 justify-center">
        <svg viewBox="0 0 16 16" className="h-4 w-4" fill="none" stroke="#fff" strokeWidth="1.200"><circle cx="10" cy="6" r="5.300" /><path d="M6.200 9.800L.5 15.500" /></svg>
      </div>
      <div className="flex w-12 justify-center">
        <svg viewBox="0 0 16 16" className="h-4 w-4" fill="none" stroke="#fff"><path d="M.5 0v2.500h10V0M.5 16v-2.500h10V16M.5 4.500h10v7H.5zM14.500 0v4M14.500 8v8" /><path d="M13 4.500h3v3h-3z" fill="#fff" stroke="none" /></svg>
      </div>
    </div>
    {tasks.map(({ icon, open, active }, i) => (
      <div key={i} className={`relative mr-px flex w-12 items-center justify-center ${active ? 'bg-[#7b4d60]' : ''}`}>
        {icon}
        {open && <span className={`absolute bottom-0 h-0.5 bg-[#79aede] ${active ? 'inset-x-0' : 'inset-x-1'}`} />}
      </div>
    ))}

    <div className="ml-auto flex items-center">
      <svg viewBox="0 0 16 16" className="h-4 w-4"><path d="M1 1c5-1 12 5 14 10-4 2-8 1-10-2-2-2-4-5-4-8z" fill="#0c0c0c" stroke="#aaa" strokeWidth=".7" /><path d="M5 9l-4 5h7z" fill="#ccc" /><circle cx="7" cy="9" r="1.800" fill="#eee" /></svg>
      <HwIcon className="ml-2 h-3.5 w-3.5" />
      <span className="ml-2.5 h-[13px] w-3 bg-[#57b6fb]" />
      <svg viewBox="0 0 14 16" className="ml-3 h-4 w-3.5" fill="none" stroke="#fff"><path d="M3.500 5V.5h5V5M2.500 5.500h7v6M2.500 5v10.500h5M5 2.500h.5M7 2.500h.5" /><path d="M7.500 12.500l2 2.500 4-4" /></svg>
      <svg viewBox="0 0 16 16" className="ml-2 h-4 w-4"><rect width="16" height="16" rx="1" fill="#1c2b12" /><path d="M7 4h7v8H7z" fill="#76b900" /><path d="M2 8c2-4 7-4 10 0-3 4-8 4-10 0z" fill="#1c2b12" stroke="#8ecb2c" /><path d="M5 8c1-2 3-2 4.500 0-1.500 2-3.500 2-4.500 0z" fill="#76b900" /></svg>
      <svg viewBox="0 0 14 14" className="ml-2.5 h-3.5 w-3.5" fill="none" stroke="#ddd" strokeWidth="1.100"><path d="M.5 13.500A13 13 0 0 1 13.500 1M4 13.500A9.500 9.500 0 0 1 13.500 4.500M7 13.500A6.500 6.500 0 0 1 13.500 8" /><circle cx="12" cy="12" r="1.300" fill="#fff" /></svg>
      <svg viewBox="0 0 16 14" className="ml-2 h-3.5 w-4" fill="none" stroke="#fff"><path d="M.5 4.500h3l3.500-3v11l-3.500-3h-3zM9.500 5a3 3 0 0 1 0 4M11.500 3a6 6 0 0 1 0 8" /><path d="M13.500 1.500a8 8 0 0 1 0 11" stroke="#a08490" /></svg>
      <span className="ml-2.5 w-[24px] tracking-[-0.4px]">ENG</span>
      <div className="ml-3 w-[54px] whitespace-nowrap text-center leading-[18px] tracking-[-0.7px]">
        <div>16:00</div>
        <div>10.04.2020</div>
      </div>
      <svg viewBox="0 0 16 16" className="ml-[18px] h-4 w-4" fill="none" stroke="#fff"><path d="M.5 1.500h15v11h-5L8 15.500 5.500 12.500h-5z" /></svg>
      <span className="ml-5 mr-1 h-10 border-l border-[#9a7483]" />
    </div>
  </div>
)

const Desktop = () => (
  <div className={`text-white ${segoe}`}>
    <span className="absolute left-[14px] top-[336px] h-3 w-3 rounded-xs bg-[#dd7aa5]" />
    <span className="absolute left-[9px] top-[360px]">de</span>
    <span className="absolute left-[15px] top-[461px]">F</span>
    <span className="absolute left-3 top-[763px]">2</span>
    <span className="absolute left-3 top-[864px]">2</span>
    <span className="absolute left-3 top-[965px]">2</span>
    <span className="absolute left-[14px] top-[536px] h-[21px] w-4 bg-[#f2f2f2]" />
    <span className="absolute left-[14px] top-[633px] h-[23px] w-4 bg-[#f2f2f2]" />
    <span className="absolute left-[14px] top-[731px] h-7 w-4 border-t border-[#59a] bg-[#eee]" />
    <span className="absolute left-[14px] top-[834px] h-[26px] w-4 border-t border-[#59a] bg-[#eee]" />
    <span className="absolute left-[14px] top-[937px] h-[23px] w-4 border-t-2 border-[#8bd] bg-[#eee]" />
    <svg viewBox="0 0 30 42" className="absolute left-[480px] top-[414px] h-[42px] w-[30px]"><path d="M0 0h22l8 8v34H0z" fill="#f6f6f8" /><path d="M22 0v8h8z" fill="#ccc" stroke="#888" strokeWidth=".6" /></svg>
    <span className="absolute left-[495px] top-[461px]">4.c</span>
    <IntelIcon className="absolute left-[470px] top-[512px] h-12 w-12" />
    <span className="absolute left-[496px] top-[562px] tracking-[-0.1px]">.exe</span>
  </div>
)

export default function App() {
  return (
    <main className="relative h-[1080px] w-[1920px] overflow-hidden bg-[#c40054]">
      <Desktop />
      <AsRock />
      <LinX />
      <HwInfo />
      <TaskManager />
      <Taskbar />
    </main>
  )
}
